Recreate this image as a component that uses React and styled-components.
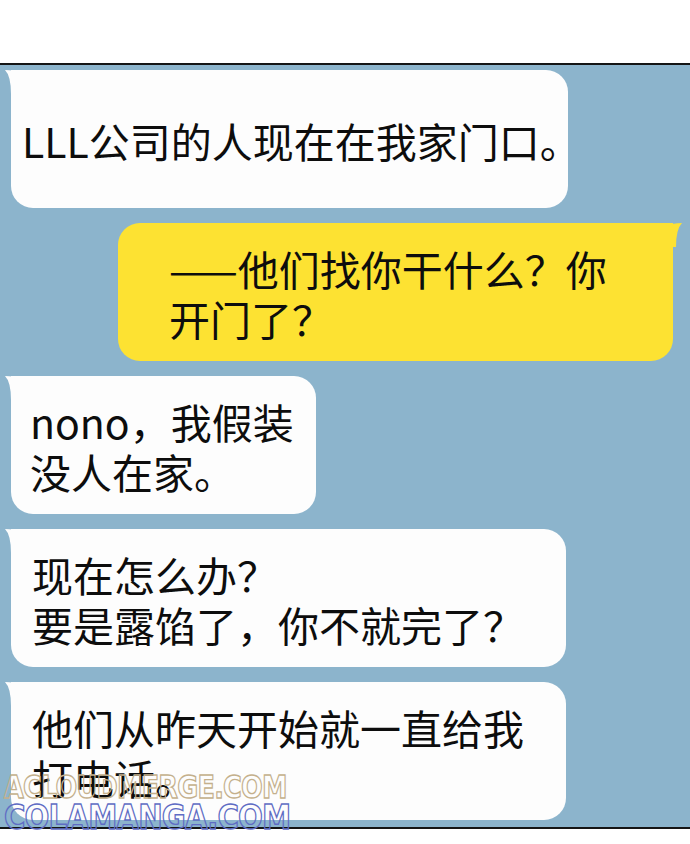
import React from 'react'
import styled, { createGlobalStyle } from 'styled-components'

const GlobalStyle = createGlobalStyle`
    html, body {
        margin: 0;
        padding: 0;
        background: #ffffff;
    }
    body {
        font-family: "Noto Sans CJK SC", "Noto Sans", sans-serif;
    }
`

const messages = [
    { side: 'left', width: 557, pad: 11, lines: ['LLL公司的人现在在我家门口。'] },
    { side: 'right', width: 555, pad: 51, lines: ['——他们找你干什么？你', '开门了？'] },
    { side: 'left', width: 305, pad: 19, lines: ['nono，我假装', '没人在家。'] },
    { side: 'left', width: 555, pad: 21, lines: ['现在怎么办？', '要是露馅了，你不就完了？'] },
    { side: 'left', width: 555, pad: 21, lines: ['他们从昨天开始就一直给我', '打电话。'] },
]

function Tail({ side, color }) {
    return (
        <TailSvg $side={side} width="30" height="24" viewBox="0 0 30 24">
            <path
                d="M0 0 Q10 0 14 3 Q18 0 30 0 L30 24 L6 24 Q6 6 0 0 Z"
                fill={color}
            />
        </TailSvg>
    )
}

function App() {
    return (
        <Page>
            <GlobalStyle />
            <TopSpace />
            <Panel>
                {messages.map((m, i) => {
                    const color = m.side === 'right' ? '#fde232' : '#fdfdfd'
                    return (
                        <Bubble key={i} $side={m.side} $width={m.width} $pad={m.pad} $color={color}>
                            <Tail side={m.side} color={color} />
                            <Text>
                                {m.lines.map((l, j) => <div key={j}>{l}</div>)}
                            </Text>
                        </Bubble>
                    )
                })}
            </Panel>
            <Watermark>
                <span className="top">ACLOUDMERGE.COM</span>
                <span className="bottom">COLAMANGA.COM</span>
            </Watermark>
        </Page>
    )
}

const Page = styled.div`
    position: relative;
    width: 690px;
    height: 844px;
    background: #ffffff;
    overflow: hidden;
`

const TopSpace = styled.div`
    height: 63px;
`

const Panel = styled.div`
    display: flex;
    flex-direction: column;
    gap: 15px;
    background: #8cb4cc;
    border-top: 2px solid #151515;
    border-bottom: 2px solid #151515;
    padding: 5px 0 7px;
`

const Bubble = styled.div`
    position: relative;
    box-sizing: border-box;
    height: 138px;
    width: ${p => p.$width}px;
    margin-left: ${p => (p.$side === 'right' ? 118 : 11)}px;
    padding: 2px 0 0 ${p => p.$pad}px;
    background: ${p => p.$color};
    border-radius: ${p => (p.$side === 'right' ? '22px 0 22px 22px' : '0 22px 22px 22px')};
    display: flex;
    align-items: center;
`

const TailSvg = styled.svg`
    position: absolute;
    top: 0;
    ${p => (p.$side === 'right'
        ? 'right: -9px; transform: scaleX(-1);'
        : 'left: -6px;')}
`

const Text = styled.div`
    font-size: 41px;
    line-height: 50px;
    color: #0d0d0d;
    white-space: nowrap;
`

const Watermark = styled.div`
    position: absolute;
    left: 4px;
    top: 772px;
    display: flex;
    flex-direction: column;
    font-family: "DejaVu Sans", sans-serif;
    font-weight: bold;
    color: transparent;
    line-height: 30px;
    span {
        display: block;
        -webkit-text-stroke: 1.4px;
    }
    .top {
        font-size: 32px;
        letter-spacing: -1px;
        -webkit-text-stroke-color: #c4b08c;
        transform: scaleX(0.8);
        transform-origin: left;
    }
    .bottom {
        font-size: 34px;
        letter-spacing: -1px;
        -webkit-text-stroke-color: #5f6cc4;
        transform: scaleX(0.86);
        transform-origin: left;
    }
`

export default App
